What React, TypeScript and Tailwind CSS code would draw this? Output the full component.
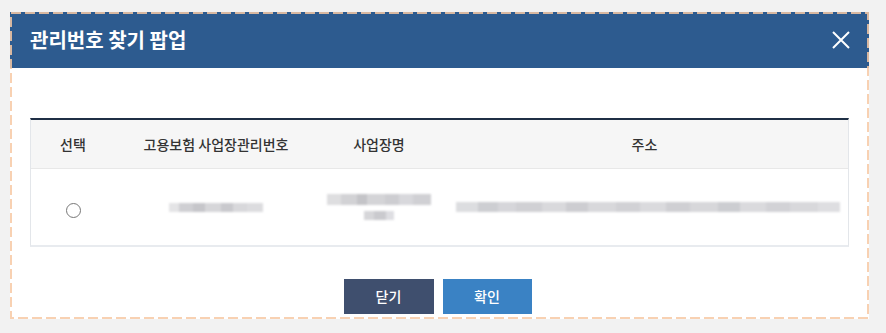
import React from "react";

const Blur = ({ segs, h = 10 }: { segs: [number, string][]; h?: number }) => (
  <div className="flex blur-[1.2px]" style={{ height: h }}>
    {segs.map(([w, c], i) => (
      <div key={i} style={{ width: w, height: h, background: c }} />
    ))}
  </div>
);

export default function App() {
  return (
    <div
      className="w-[886px] h-[333px] bg-[#f2f2f2] pt-[12px] pl-[10px]"
      style={{ fontFamily: '"Noto Sans CJK KR", "Noto Sans", sans-serif' }}
    >
      <div className="relative w-[859px] h-[307px] bg-white flex flex-col">
        <div className="h-[56px] bg-[#2d5b8f] flex items-center justify-between pl-[20px] pr-[19px] shrink-0">
          <span className="text-white text-[20px] font-bold">관리번호 찾기 팝업</span>
          <svg width="18" height="18" viewBox="0 0 18 18">
            <path d="M1 1 L17 17 M17 1 L1 17" stroke="white" strokeWidth="2" />
          </svg>
        </div>
        <div className="px-[20px] pt-[50px]">
          <div className="border-t-2 border-[#1f2f45] border-x border-x-[#e3e6ea] border-b-2 border-b-[#e8ebef]">
            <div className="grid grid-cols-[84px_202px_124px_1fr] h-[49px] bg-[#f6f6f6] border-b border-[#e8e8e8] items-center text-[14px] text-[#333] font-medium text-center">
              <div>선택</div>
              <div>고용보험 사업장관리번호</div>
              <div>사업장명</div>
              <div>주소</div>
            </div>
            <div className="grid grid-cols-[84px_202px_124px_1fr] h-[76px] items-center">
              <div className="flex justify-center pt-[6px]">
                <div className="w-[15px] h-[15px] rounded-full border border-[#777] bg-white" />
              </div>
              <div className="flex justify-center pt-[1px]">
                <Blur
                  h={9}
                  segs={[
                    [10, "#e4e4e6"], [14, "#cfcfd3"], [12, "#c6c6ca"], [16, "#d6d6d9"],
                    [12, "#c9c9cd"], [14, "#d8d8db"], [16, "#dcdcdf"],
                  ]}
                />
              </div>
              <div className="flex flex-col items-center gap-[6px]">
                <Blur
                  h={11}
                  segs={[
                    [14, "#dedee0"], [16, "#d2d2d5"], [10, "#c4c4c8"], [18, "#d4d4d7"],
                    [14, "#cdcdd1"], [14, "#d8d8dc"], [18, "#d0d0d4"],
                  ]}
                />
                <Blur h={9} segs={[[10, "#d6d6d9"], [12, "#cacace"], [8, "#dedee2"]]} />
              </div>
              <div className="flex justify-center pl-[6px]">
                <Blur
                  h={10}
                  segs={[
                    [22, "#dcdde0"], [20, "#cdced2"], [18, "#d6d6da"], [26, "#d0d0d4"],
                    [24, "#d9d9dc"], [22, "#cdcdd1"], [28, "#d8d8db"], [24, "#d1d1d5"],
                    [26, "#dadadd"], [24, "#cfcfd3"], [28, "#d7d7da"], [22, "#cccdd1"],
                    [26, "#dadadd"], [24, "#d2d2d6"], [28, "#d8d8db"], [22, "#dedee1"],
                  ]}
                />
              </div>
            </div>
          </div>
        </div>
        <div className="flex justify-center gap-[9px] mt-auto mb-[5px] pr-[4px]">
          <button className="w-[90px] h-[35px] bg-[#3f4f6e] text-white text-[14px] font-medium">닫기</button>
          <button className="w-[89px] h-[35px] bg-[#3a82c4] text-white text-[14px] font-medium">확인</button>
        </div>
        <svg className="absolute inset-0 pointer-events-none" width="859" height="307">
          <rect
            x="1"
            y="1"
            width="857"
            height="305"
            fill="none"
            stroke="#f7c9a4"
            strokeOpacity="0.85"
            strokeWidth="2"
            strokeDasharray="10 4"
          />
        </svg>
      </div>
    </div>
  );
}
